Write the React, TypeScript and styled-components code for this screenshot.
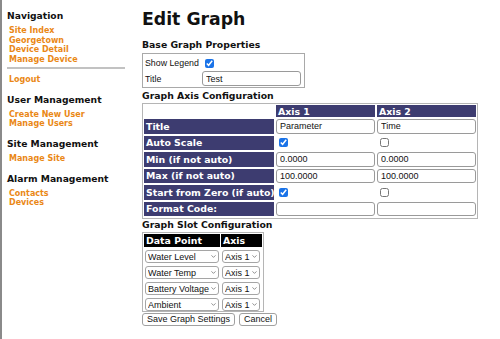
import * as React from "react";
import styled, { createGlobalStyle } from "styled-components";
import { ChevronDown } from "lucide-react";

const GlobalStyle = createGlobalStyle`
  html, body {
    margin: 0;
    padding: 0;
    background: #fff;
  }
  body {
    font-family: "DejaVu Sans", Verdana, sans-serif;
    color: #111;
  }
`;

const Page = styled.div`
  display: flex;
  width: 500px;
  height: 339px;
  overflow: hidden;
  border-left: 2px solid #8a8a8a;
  box-sizing: border-box;
`;

const Sidebar = styled.nav`
  width: 126px;
  flex: none;
  padding: 10px 0 0 5px;
  box-sizing: border-box;
`;

const NavHeading = styled.div`
  font-size: 9.2px;
  font-weight: bold;
  line-height: 12px;
  margin-bottom: 4px;
`;

const NavGroup = styled.div`
  margin-bottom: 9px;
`;

const NavLink = styled.a`
  display: block;
  padding-left: 2px;
  font-size: 8px;
  font-weight: bold;
  line-height: 9.7px;
  color: #ea8816;
  text-decoration: none;
`;

const Rule = styled.hr`
  border: none;
  border-top: 2px solid #c2c2c2;
  margin: 2px 0 6px 0;
  width: 118px;
`;

const Main = styled.main`
  flex: 1;
  padding: 7px 0 0 14px;
`;

const Title = styled.h1`
  margin: 0 0 9px 0;
  font-size: 17.3px;
  font-weight: bold;
  line-height: 24px;
`;

const SectionTitle = styled.h2<{ $top?: number }>`
  margin: ${(p) => p.$top ?? 0}px 0 0 0;
  font-size: 9.3px;
  font-weight: bold;
  line-height: 10px;
`;

const PropsBox = styled.div`
  display: grid;
  grid-template-columns: 57px 99px;
  grid-template-rows: 16px 15px;
  align-items: center;
  width: 158px;
  margin-top: 3px;
  padding: 1px 1px 1px 2px;
  border: 1px solid #a9a9a9;
  font-family: "Liberation Sans", Arial, sans-serif;
  font-size: 8.8px;
`;

const PropLabel = styled.span`
  white-space: nowrap;
`;

const AxisGrid = styled.div`
  display: grid;
  grid-template-columns: 130px 99px 99px;
  grid-template-rows: 12px repeat(6, 14.5px);
  gap: 2px;
  width: fit-content;
  margin-top: 2px;
  padding: 1px 1px 2px 1px;
  border: 1px solid #b5b5b5;
`;

const SlotGrid = styled.div`
  display: grid;
  grid-template-columns: 76px 41px;
  grid-template-rows: 13px repeat(4, 13px);
  column-gap: 1px;
  row-gap: 3px;
  width: fit-content;
  margin-top: 2px;
  padding: 1px 1px 0 1px;
  border: 1px solid #b5b5b5;
`;

const HeadCell = styled.div<{ $tone: "navy" | "black" | "none" }>`
  background: ${(p) => (p.$tone === "navy" ? "#3d3c70" : p.$tone === "black" ? "#000" : "transparent")};
  color: #fff;
  font-size: 9.4px;
  font-weight: bold;
  padding: 0 2px;
  display: flex;
  align-items: center;
  white-space: nowrap;
`;

const LabelCell = styled.div`
  background: #3d3c70;
  color: #fff;
  font-size: 9.4px;
  font-weight: bold;
  padding: 0 2px;
  display: flex;
  align-items: center;
  white-space: nowrap;
`;

const ValueCell = styled.div`
  display: flex;
  align-items: center;
`;

const TextInput = styled.input`
  display: block;
  width: 100%;
  height: 100%;
  box-sizing: border-box;
  border: 1px solid #9a9a9a;
  border-radius: 3px;
  padding: 0 3px;
  font-family: "Liberation Sans", Arial, sans-serif;
  font-size: 9px;
  color: #111;
  background: #fff;
  outline: none;
`;

const Check = styled.input`
  display: block;
  width: 9px;
  height: 9px;
  margin: 0 0 0 3px;
  accent-color: #1a73e8;
`;

const SelectWrap = styled.div<{ $w: number }>`
  position: relative;
  width: ${(p) => p.$w}px;
  height: 13px;
  margin-left: 1px;
`;

const Select = styled.select`
  display: block;
  appearance: none;
  -webkit-appearance: none;
  width: 100%;
  height: 100%;
  box-sizing: border-box;
  border: 1px solid #a5a5a5;
  border-radius: 3px;
  background: #fff;
  padding: 0 8px 0 2px;
  font-family: "Liberation Sans", Arial, sans-serif;
  font-size: 9px;
  color: #111;
  outline: none;
`;

const Chevron = styled(ChevronDown)`
  position: absolute;
  right: 2px;
  top: 3px;
  width: 7px;
  height: 7px;
  color: #444;
  pointer-events: none;
`;

const Buttons = styled.div`
  display: flex;
  gap: 4px;
  margin-top: 1px;
`;

const Button = styled.button`
  height: 13px;
  padding: 0 4px;
  border: 1px solid #a0a0a0;
  border-radius: 3px;
  background: #fff;
  font-family: "Liberation Sans", Arial, sans-serif;
  font-size: 9px;
  color: #111;
  line-height: 11px;
`;

const nav = [
  { heading: "Navigation", links: ["Site Index", "Georgetown", "Device Detail", "Manage Device"], rule: true },
  { heading: "User Management", links: ["Create New User", "Manage Users"] },
  { heading: "Site Management", links: ["Manage Site"] },
  { heading: "Alarm Management", links: ["Contacts", "Devices"] },
];

const axisRows = [
  { label: "Title", kind: "text", a: "Parameter", b: "Time" },
  { label: "Auto Scale", kind: "check", a: true, b: false },
  { label: "Min (if not auto)", kind: "text", a: "0.0000", b: "0.0000" },
  { label: "Max (if not auto)", kind: "text", a: "100.0000", b: "100.0000" },
  { label: "Start from Zero (if auto)", kind: "check", a: true, b: false },
  { label: "Format Code:", kind: "text", a: "", b: "" },
];

const slots = ["Water Level", "Water Temp", "Battery Voltage", "Ambient"];

const Value = ({ kind, value }: { kind: string; value: string | boolean }) => (
  <ValueCell>
    {kind === "check" ? (
      <Check type="checkbox" defaultChecked={value as boolean} />
    ) : (
      <TextInput defaultValue={value as string} />
    )}
  </ValueCell>
);

const Dropdown = ({ width, value, options }: { width: number; value: string; options: string[] }) => (
  <SelectWrap $w={width}>
    <Select defaultValue={value}>
      {options.map((o) => (
        <option key={o}>{o}</option>
      ))}
    </Select>
    <Chevron strokeWidth={2} />
  </SelectWrap>
);

export default function App() {
  return (
    <>
      <GlobalStyle />
      <Page>
        <Sidebar>
          {nav.map((g) => (
            <NavGroup key={g.heading}>
              <NavHeading>{g.heading}</NavHeading>
              {g.links.map((l) => (
                <NavLink key={l} href="#">
                  {l}
                </NavLink>
              ))}
              {g.rule && (
                <>
                  <Rule />
                  <NavLink href="#">Logout</NavLink>
                </>
              )}
            </NavGroup>
          ))}
        </Sidebar>
        <Main>
          <Title>Edit Graph</Title>
          <SectionTitle>Base Graph Properties</SectionTitle>
          <PropsBox>
            <PropLabel>Show Legend</PropLabel>
            <Check type="checkbox" defaultChecked />
            <PropLabel>Title</PropLabel>
            <TextInput defaultValue="Test" />
          </PropsBox>

          <SectionTitle $top={3}>Graph Axis Configuration</SectionTitle>
          <AxisGrid>
            <HeadCell $tone="none" />
            <HeadCell $tone="navy">Axis 1</HeadCell>
            <HeadCell $tone="navy">Axis 2</HeadCell>
            {axisRows.map((r) => (
              <React.Fragment key={r.label}>
                <LabelCell>{r.label}</LabelCell>
                <Value kind={r.kind} value={r.a} />
                <Value kind={r.kind} value={r.b} />
              </React.Fragment>
            ))}
          </AxisGrid>

          <SectionTitle $top={1}>Graph Slot Configuration</SectionTitle>
          <SlotGrid>
            <HeadCell $tone="black">Data Point</HeadCell>
            <HeadCell $tone="black">Axis</HeadCell>
            {slots.map((s) => (
              <React.Fragment key={s}>
                <Dropdown width={74} value={s} options={[s]} />
                <Dropdown width={38} value="Axis 1" options={["Axis 1", "Axis 2"]} />
              </React.Fragment>
            ))}
          </SlotGrid>
          <Buttons>
            <Button>Save Graph Settings</Button>
            <Button>Cancel</Button>
          </Buttons>
        </Main>
      </Page>
    </>
  );
}
